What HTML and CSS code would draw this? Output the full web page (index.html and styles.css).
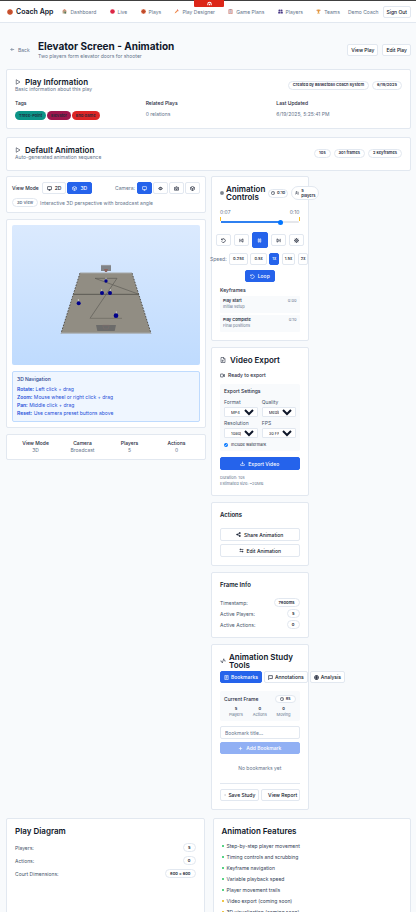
FILE: index.html
```html
<!DOCTYPE html>
<html lang="en">
<head>
<meta charset="utf-8">
<meta name="viewport" content="width=device-width, initial-scale=1">
<title>Coach App</title>
<link rel="stylesheet" href="styles.css">
</head>
<body>
<svg class="sprite" aria-hidden="true">
  <symbol id="play" viewBox="0 0 24 24"><path d="M5 3l15 9-15 9z"/></symbol>
  <symbol id="back" viewBox="0 0 24 24"><path d="M20 12H4M11 5l-7 7 7 7"/></symbol>
  <symbol id="monitor" viewBox="0 0 24 24"><rect x="2" y="3" width="20" height="14" rx="2"/><path d="M8 21h8M12 17v4"/></symbol>
  <symbol id="box" viewBox="0 0 24 24"><path d="M12 2l9 5v10l-9 5-9-5V7zM3 7l9 5 9-5M12 12v10"/></symbol>
  <symbol id="eye" viewBox="0 0 24 24"><path d="M2 12c4-8 16-8 20 0-4 8-16 8-20 0z"/><circle cx="12" cy="12" r="4"/></symbol>
  <symbol id="camera" viewBox="0 0 24 24"><path d="M2 7h5l2-3h6l2 3h5v13H2z"/><circle cx="12" cy="13" r="4"/></symbol>
  <symbol id="clock" viewBox="0 0 24 24"><circle cx="12" cy="12" r="10"/><path d="M12 6v6l4 2"/></symbol>
  <symbol id="users" viewBox="0 0 24 24"><circle cx="9" cy="7" r="4"/><path d="M2 21v-3c0-5 14-5 14 0v3M17 4c4 1 4 6 0 7M22 21v-3c0-2-1-3-3-4"/></symbol>
  <symbol id="reset" viewBox="0 0 24 24"><path d="M3 3v6h6M3 9a9 9 0 1 1 0 7"/></symbol>
  <symbol id="prev" viewBox="0 0 24 24"><path d="M19 4L8 12l11 8zM4 4v16"/></symbol>
  <symbol id="next" viewBox="0 0 24 24"><path d="M5 4l11 8-11 8zM20 4v16"/></symbol>
  <symbol id="pause" viewBox="0 0 24 24"><path d="M6 4h4v16H6zM14 4h4v16h-4z"/></symbol>
  <symbol id="gear" viewBox="0 0 24 24"><circle cx="12" cy="12" r="8"/><circle cx="12" cy="12" r="3"/><path d="M12 1v4M12 19v4M1 12h4M19 12h4M4 4l3 3M17 17l3 3M20 4l-3 3M7 17l-3 3"/></symbol>
  <symbol id="file" viewBox="0 0 24 24"><path d="M4 2h11l5 5v15H4zM14 2v6h6M9 12v6l5-3z"/></symbol>
  <symbol id="video" viewBox="0 0 24 24"><rect x="2" y="5" width="14" height="14" rx="2"/><path d="M16 11l6-4v10l-6-4"/></symbol>
  <symbol id="download" viewBox="0 0 24 24"><path d="M12 3v12M7 10l5 5 5-5M3 15v6h18v-6"/></symbol>
  <symbol id="share" viewBox="0 0 24 24"><g fill="currentColor"><circle cx="18" cy="5" r="3"/><circle cx="6" cy="12" r="3"/><circle cx="18" cy="19" r="3"/></g><path d="M8 11l8-5M8 13l8 5"/></symbol>
  <symbol id="sliders" viewBox="0 0 24 24"><path d="M3 7h18M7 3v8M3 17h18M17 13v8"/></symbol>
  <symbol id="pulse" viewBox="0 0 24 24"><path d="M1 12h5l3 8 6-17 3 9h5"/></symbol>
  <symbol id="bookmark" viewBox="0 0 24 24"><path d="M4 2h16v20H4zM8 7h8M8 12h8M8 17h5"/></symbol>
  <symbol id="message" viewBox="0 0 24 24"><path d="M3 3h18v14H8l-5 5z"/></symbol>
  <symbol id="globe" viewBox="0 0 24 24"><circle cx="12" cy="12" r="10"/><path d="M2 12h20M12 2v20M5 6h14M5 18h14"/></symbol>
  <symbol id="plus" viewBox="0 0 24 24"><path d="M12 4v16M4 12h16"/></symbol>
  <symbol id="dot" viewBox="0 0 24 24"><path d="M10 12h5"/></symbol>
  <symbol id="ball" viewBox="0 0 24 24"><circle cx="12" cy="12" r="11" fill="#dc5b32" stroke="none"/><path d="M12 1v22M1 12h22M5 4c5 5 5 11 0 16M19 4c-5 5-5 11 0 16" stroke="#a8452c" stroke-width="2" fill="none"/></symbol>
</svg>

<div class="shell">
  <header class="topbar">
    <a class="brand" href="#"><svg class="ico l"><use href="#ball"/></svg>Coach App</a>
    <nav class="nav">
      <a href="#"><svg class="ico" viewBox="0 0 24 24"><path d="M3 9l9-7 9 7v13H3z" fill="#b9a184" stroke="none"/><path d="M3 9l9-7 9 7" stroke="#d4543a"/><path d="M12 13h7v9h-7z" fill="#4c7a5a" stroke="none"/></svg>Dashboard</a>
      <a href="#"><svg class="ico" viewBox="0 0 24 24"><circle cx="12" cy="12" r="11" fill="#dc2645" stroke="none"/></svg>Live</a>
      <a href="#"><svg class="ico"><use href="#ball"/></svg>Plays</a>
      <a href="#"><svg class="ico" viewBox="0 0 24 24"><path d="M3 21l3-7L17 3l4 4L10 18z" fill="#ee8a4a" stroke="none"/><path d="M16 3l5 5" stroke="#d53c4c" stroke-width="4"/></svg>Play Designer</a>
      <a href="#"><svg class="ico" viewBox="0 0 24 24"><path d="M4 3h16v20H4z" fill="#f3dfe0" stroke="#c66a5c"/><path d="M9 2h6v4H9z" fill="#7e89a5" stroke="none"/><path d="M8 11h8M8 16h8" stroke="#9aa3bc"/></svg>Game Plans</a>
      <a href="#"><svg class="ico" viewBox="0 0 24 24"><g fill="#4b3a86" stroke="none"><circle cx="7" cy="7" r="5"/><circle cx="17" cy="7" r="5"/><path d="M1 13h10v8H1zM13 13h10v8H13z"/></g></svg>Players</a>
      <a href="#"><svg class="ico" viewBox="0 0 24 24"><path d="M6 2h12v8l-4 4v4h4v4H6v-4h4v-4l-4-4z" fill="#e39a3b" stroke="none"/><path d="M2 4l4 5M22 4l-4 5" stroke="#d0573c"/></svg>Teams</a>
    </nav>
    <span class="user">Demo Coach</span>
    <button class="btn">Sign Out</button>
    <span class="notch"><svg class="ico" viewBox="0 0 24 24"><path d="M4 20v-6a8 8 0 0 1 16 0v6M12 13v7" stroke-width="5"/></svg></span>
  </header>

  <main class="page">
    <div class="page-head">
      <a class="back" href="#"><svg class="ico"><use href="#back"/></svg>Back</a>
      <div class="heading">
        <h1>Elevator Screen - Animation</h1>
        <p>Two players form elevator doors for shooter</p>
      </div>
      <button class="btn">View Play</button>
      <button class="btn">Edit Play</button>
    </div>

    <section class="card info">
      <div class="split">
        <div>
          <h2><svg class="ico l"><use href="#play"/></svg>Play Information</h2>
          <p class="muted">Basic information about this play</p>
        </div>
        <div class="badges"><span class="badge">Created by Basketball Coach System</span><span class="badge">6/19/2025</span></div>
      </div>
      <div class="facts">
        <div><h3>Tags</h3><div class="tags"><span class="tag teal">Three-Point</span><span class="tag plum">Elevator</span><span class="tag red">End Game</span></div></div>
        <div><h3>Related Plays</h3><p class="muted">0 relations</p></div>
        <div><h3>Last Updated</h3><p class="muted">6/19/2025, 5:25:41 PM</p></div>
      </div>
    </section>

    <section class="card intro">
      <div class="split">
        <div>
          <h2><svg class="ico l"><use href="#play"/></svg>Default Animation</h2>
          <p class="muted">Auto-generated animation sequence</p>
        </div>
        <div class="badges"><span class="badge">10s</span><span class="badge">301 frames</span><span class="badge">2 keyframes</span></div>
      </div>
    </section>

    <div class="studio">
      <div class="stack main-col">
        <section class="card tight">
          <div class="toolbar">
            <strong>View Mode</strong>
            <button class="btn mode"><svg class="ico"><use href="#monitor"/></svg>2D</button>
            <button class="btn mode primary"><svg class="ico"><use href="#box"/></svg>3D</button>
            <span class="cam-label">Camera:</span>
            <button class="btn cam primary" aria-label="Broadcast"><svg class="ico"><use href="#monitor"/></svg></button>
            <button class="btn cam" aria-label="Overhead"><svg class="ico"><use href="#eye"/></svg></button>
            <button class="btn cam" aria-label="Sideline"><svg class="ico"><use href="#camera"/></svg></button>
            <button class="btn cam" aria-label="Free"><svg class="ico"><use href="#box"/></svg></button>
          </div>
          <div class="mode-note"><span class="badge">3D View</span><span>Interactive 3D perspective with broadcast angle</span></div>
        </section>

        <section class="card tight">
          <svg class="court" viewBox="36 30 564 420" role="img" aria-label="Court">
            <defs><linearGradient id="sky" x1="0" y1="0" x2="0" y2="1"><stop offset="0" stop-color="#dbeafe"/><stop offset="1" stop-color="#bfdbfe"/></linearGradient></defs>
            <rect x="36" y="30" width="564" height="420" rx="6" fill="url(#sky)"/>
            <path d="M240 174H396L453 355H183z" fill="#918d83"/>
            <path d="M240 174L183 355M396 174l57 181" stroke="#55534e" stroke-width="3" stroke-dasharray="5 4"/>
            <path d="M183 354H453M240 174H396" stroke="#a5a8a8" stroke-width="3"/>
            <path d="M220 238H417" stroke="#5c5a54" stroke-width="3"/>
            <path d="M285 190H351L270 310M285 190L417 238" stroke="#5c5a54" stroke-width="2" fill="none"/>
            <path d="M270 310H366" stroke="#77746c" stroke-width="3"/>
            <path d="M303 150h30v18h-30z" fill="#808488"/><path d="M303 151h30" stroke="#a7abb0" stroke-width="2"/>
            <path d="M312 162h12l-3 9h-6z" fill="#8c6460"/>
            <path d="M288 330h60l-4 18h-52z" fill="#6b6b6a"/><path d="M308 331h20l-4 11h-12z" fill="none" stroke="#7b6d69" stroke-width="2"/>
            <path d="M318 188v8M305 223v8M331 222v8M235 252v8M349 289v8" stroke="#c5c5c0" stroke-width="3"/>
            <g fill="#00008b"><circle cx="318" cy="198" r="5"/><circle cx="306" cy="234" r="6"/><circle cx="330" cy="234" r="6"/><circle cx="236" cy="265" r="6"/><circle cx="348" cy="302" r="7"/></g>
          </svg>
          <div class="help">
            <h3>3D Navigation</h3>
            <p><b>Rotate:</b> Left click + drag</p>
            <p><b>Zoom:</b> Mouse wheel or right click + drag</p>
            <p><b>Pan:</b> Middle click + drag</p>
            <p><b>Reset:</b> Use camera preset buttons above</p>
          </div>
        </section>

        <section class="card tight status">
          <div><b>View Mode</b><span>3D</span></div>
          <div><b>Camera</b><span>Broadcast</span></div>
          <div><b>Players</b><span>5</span></div>
          <div><b>Actions</b><span>0</span></div>
        </section>
      </div>

      <div class="stack">
        <section class="card">
          <div class="control-head">
            <svg class="ico s"><use href="#gear"/></svg>
            <h2>Animation Controls</h2>
            <span class="badge"><svg class="ico s"><use href="#clock"/></svg>0:10</span>
            <span class="badge tall"><svg class="ico s"><use href="#users"/></svg><span>5<br>players</span></span>
          </div>
          <div class="times"><span>0:07</span><span>0:10</span></div>
          <div class="scrub"><input type="range" min="0" max="100" value="78" aria-label="Position"></div>
          <div class="transport">
            <button class="btn" aria-label="Reset"><svg class="ico"><use href="#reset"/></svg></button>
            <button class="btn" aria-label="Previous"><svg class="ico"><use href="#prev"/></svg></button>
            <button class="btn primary big" aria-label="Pause"><svg class="ico"><use href="#pause"/></svg></button>
            <button class="btn" aria-label="Next"><svg class="ico"><use href="#next"/></svg></button>
            <button class="btn" aria-label="Settings"><svg class="ico"><use href="#gear"/></svg></button>
          </div>
          <div class="speeds">
            <span>Speed:</span>
            <button class="btn">0.25x</button><button class="btn">0.5x</button><button class="btn primary">1x</button><button class="btn">1.5x</button><button class="btn">2x</button>
          </div>
          <button class="btn primary loop"><svg class="ico"><use href="#reset"/></svg>Loop</button>
          <h3 class="key-title">Keyframes</h3>
          <div class="keyframe"><b>Play Start</b><span>0:00</span><p>Initial setup</p></div>
          <div class="keyframe"><b>Play Complete</b><span>0:10</span><p>Final positions</p></div>
        </section>

        <section class="card">
          <h2><svg class="ico l"><use href="#file"/></svg>Video Export</h2>
          <p class="ready"><svg class="ico"><use href="#video"/></svg>Ready to export</p>
          <div class="panel settings">
            <h3>Export Settings</h3>
            <div class="fields">
              <label>Format<select><option>MP4</option></select></label>
              <label>Quality<select><option>Medium</option></select></label>
              <label>Resolution<select><option>1080p</option></select></label>
              <label>FPS<select><option>30 FPS</option></select></label>
            </div>
            <label class="check"><input type="checkbox" checked>Include watermark</label>
          </div>
          <button class="btn primary wide"><svg class="ico"><use href="#download"/></svg>Export Video</button>
          <p class="fine">Duration: 10s</p>
          <p class="fine">Estimated size: ~20MB</p>
        </section>

        <section class="card">
          <h3 class="card-title">Actions</h3>
          <div class="actions">
            <button class="btn wide"><svg class="ico"><use href="#share"/></svg>Share Animation</button>
            <button class="btn wide"><svg class="ico"><use href="#sliders"/></svg>Edit Animation</button>
          </div>
        </section>

        <section class="card">
          <h3 class="card-title">Frame Info</h3>
          <dl class="rows">
            <div><dt>Timestamp:</dt><dd class="badge">7800ms</dd></div>
            <div><dt>Active Players:</dt><dd class="badge">5</dd></div>
            <div><dt>Active Actions:</dt><dd class="badge">0</dd></div>
          </dl>
        </section>

        <section class="card">
          <h2 class="study-title"><svg class="ico l"><use href="#pulse"/></svg><span>Animation Study Tools</span></h2>
          <div class="tabs">
            <button class="btn primary"><svg class="ico"><use href="#bookmark"/></svg>Bookmarks</button>
            <button class="btn"><svg class="ico"><use href="#message"/></svg>Annotations</button>
            <button class="btn"><svg class="ico"><use href="#globe"/></svg>Analysis</button>
          </div>
          <div class="panel frame">
            <div class="split"><h3>Current Frame</h3><span class="badge"><svg class="ico s"><use href="#clock"/></svg>8s</span></div>
            <div class="counts"><div><b>5</b><span>Players</span></div><div><b>0</b><span>Actions</span></div><div><b>0</b><span>Moving</span></div></div>
          </div>
          <input class="field" type="text" placeholder="Bookmark title..." aria-label="Bookmark title">
          <button class="btn primary wide" disabled><svg class="ico"><use href="#plus"/></svg>Add Bookmark</button>
          <p class="empty">No bookmarks yet</p>
          <div class="footer-actions"><button class="btn"><svg class="ico s"><use href="#dot"/></svg>Save Study</button><button class="btn"><svg class="ico s"></svg>View Report</button></div>
        </section>
      </div>
    </div>

    <div class="summary">
      <section class="card">
        <h2>Play Diagram</h2>
        <dl class="rows loose">
          <div><dt>Players:</dt><dd class="badge">5</dd></div>
          <div><dt>Actions:</dt><dd class="badge">0</dd></div>
          <div><dt>Court Dimensions:</dt><dd class="badge">800 x 600</dd></div>
        </dl>
      </section>
      <section class="card">
        <h2>Animation Features</h2>
        <ul class="features">
          <li>Step-by-step player movement</li>
          <li>Timing controls and scrubbing</li>
          <li>Keyframe navigation</li>
          <li>Variable playback speed</li>
          <li>Player movement trails</li>
          <li class="soon">Video export (coming soon)</li>
          <li class="soon">3D visualization (coming soon)</li>
        </ul>
      </section>
    </div>
  </main>
</div>
</body>
</html>
```
FILE: styles.css
```css
* { box-sizing: border-box; margin: 0; padding: 0; }
body { font: 5px/6px Inter, "Liberation Sans", sans-serif; color: #1e293b; background: #f8fafc; }
a { color: inherit; text-decoration: none; }
button, input, select { font: inherit; color: inherit; }
.sprite { position: absolute; width: 0; height: 0; }
.shell { height: 100vh; overflow-y: auto; scrollbar-width: none; }

.ico { width: 5px; height: 5px; flex: none; fill: none; stroke: currentColor; stroke-width: 3; }
.ico.s { width: 4px; height: 4px; }
.ico.l { width: 6px; height: 6px; }

.topbar { position: relative; display: flex; align-items: center; height: 23px; padding: 0 5px 0 7px; background: #fff; border-top: 1px solid #404040; border-bottom: 1px solid #e2e8f0; }
.brand { display: flex; align-items: center; gap: 3px; font-size: 7px; font-weight: 600; color: #0f172a; }
.nav { flex: 1; display: flex; justify-content: space-between; margin: 0 8px 0 9px; color: #64748b; }
.nav a { display: flex; align-items: center; gap: 3px; white-space: nowrap; }
.user { margin-right: 4px; color: #64748b; white-space: nowrap; }
.notch { position: absolute; top: -1px; left: 194px; width: 30px; height: 7px; display: flex; justify-content: center; align-items: center; background: #dc2618; color: #fff; border-radius: 0 0 1px 1px; }

.btn { display: flex; align-items: center; justify-content: center; gap: 3px; height: 12px; padding: 0 4px; background: #fff; border: 1px solid #e2e8f0; border-radius: 2px; font-weight: 500; color: #0f172a; white-space: nowrap; }
.btn.primary { background: #2563eb; border-color: #2563eb; color: #fff; }
.btn.wide { width: 100%; height: 13px; }
.btn.wide:disabled { height: 12px; opacity: .5; }

.badge { display: flex; align-items: center; justify-content: center; gap: 2px; height: 9px; padding: 0 4px; background: #fff; border: 1px solid #e2e8f0; border-radius: 8px; font-size: 4px; font-weight: 600; white-space: nowrap; }
.badges { display: flex; gap: 3px; }
.split { display: flex; align-items: center; justify-content: space-between; }
.muted { color: #64748b; }

.page { padding: 17px 5px 8px 6px; }
.page-head { display: flex; align-items: center; gap: 4px; margin-bottom: 9px; }
.page-head .btn, .topbar .btn { padding: 0 3px; }
.back { display: flex; gap: 3px; width: 28px; padding-left: 4px; color: #64748b; }
.heading { flex: 1; }
h1 { font-size: 10px; line-height: 12px; font-weight: 700; color: #0f172a; }
.heading p { line-height: 8px; color: #64748b; }
h2 { display: flex; align-items: center; gap: 4px; font-size: 8px; line-height: 8px; font-weight: 600; color: #0f172a; }
h2 .ico { stroke-width: 2; }
h3 { font-size: 5px; line-height: 6px; font-weight: 500; }

.card { padding: 8px; background: #fff; border: 1px solid #e2e8f0; border-radius: 2px; }
.card.tight { padding: 5px; }
.info { margin-bottom: 8px; }
.facts { display: grid; grid-template-columns: repeat(3, 1fr); gap: 5px; margin-top: 8px; }
.facts h3 { margin-bottom: 5px; }
.tags { display: flex; gap: 1px; }
.tag { height: 9px; padding: 0 4px; border-radius: 5px; font-size: 4px; line-height: 9px; font-weight: 600; white-space: nowrap; }
.teal { background: #0d9488; }
.plum { background: #9d174d; }
.red { background: #dc2626; }
.intro { padding: 8px 8px 10px; margin-bottom: 5px; }

.studio { display: grid; grid-template-columns: repeat(4, minmax(0, 1fr)); gap: 5px; align-items: start; }
.main-col { grid-column: span 2; }
.stack { display: grid; grid-template-columns: minmax(0, 1fr); gap: 6px; }

.toolbar { display: flex; align-items: center; gap: 1px; }
.toolbar strong { margin-right: 2px; font-weight: 500; }
.mode { padding: 0 4px; }
.cam-label { margin-left: auto; margin-right: 1px; color: #64748b; }
.cam { width: 15px; padding: 0; }
.mode-note { display: flex; align-items: center; gap: 2px; margin-top: 4px; color: #64748b; }
.court { display: block; width: 100%; }
.help { margin-top: 6px; padding: 4px; background: #eff6ff; border: 1px solid #bfdbfe; border-radius: 2px; color: #1d4ed8; }
.help h3 { line-height: 7px; margin-bottom: 2px; color: #1e3a8a; }
.help p { line-height: 8px; }
.help b { font-weight: 600; }
.status { display: grid; grid-template-columns: repeat(4, 1fr); text-align: center; line-height: 7px; }
.status b { display: block; font-weight: 500; }
.status span { color: #64748b; }

.control-head { display: flex; align-items: center; gap: 2px; height: 16px; }
.control-head h2 { flex: none; width: 40px; }
.control-head .badge { flex: none; padding: 0 2px; }
.control-head .tall { height: 14px; margin-left: 1px; padding: 0 3px; line-height: 5px; }
.times { display: flex; justify-content: space-between; margin-top: 8px; color: #64748b; }
.scrub { height: 10px; margin: 2px 0 5px; border: solid #fbbf24; border-width: 0 1px; border-image: linear-gradient(#fbbf24 40%, transparent 40%) 1; }
input[type=range] { display: block; width: 100%; height: 10px; appearance: none; background: linear-gradient(90deg, #2f80f0 78%, #e5e7eb 78%) center / 100% 2px no-repeat; }
input[type=range]::-webkit-slider-thumb { appearance: none; width: 5px; height: 5px; border-radius: 50%; background: #0075ff; }
.transport { display: flex; align-items: center; justify-content: space-between; margin: 0 -4px; }
.transport .btn { width: 15px; padding: 0; }
.transport .big { width: 16px; height: 16px; }
.speeds { display: flex; align-items: center; justify-content: space-between; margin: 5px -9px 5px -10px; color: #64748b; }
.speeds .btn { padding: 0 2px; font-size: 4px; }
.speeds .btn:nth-of-type(-n+2) { padding: 0 3px; }
.loop { margin: 0 auto; }
.key-title { margin: 5px 0 3px; }
.keyframe { display: grid; grid-template-columns: 1fr auto; padding: 2px 3px 3px; background: #f8fafc; border-radius: 1px; font-size: 4px; color: #64748b; }
.keyframe b { font-weight: 600; color: #1e293b; }
.keyframe + .keyframe { margin-top: 2px; }

.ready { display: flex; align-items: center; gap: 3px; margin: 8px 0 6px; font-weight: 500; }
.panel { padding: 4px; background: #f8fafc; border-radius: 2px; }
.settings { padding-bottom: 3px; margin-bottom: 6px; }
.fields { display: grid; grid-template-columns: repeat(2, minmax(0, 1fr)); gap: 3px 4px; margin: 5px 0 4px; color: #475569; }
.fields select { display: block; width: 100%; height: 10px; margin-top: 2px; padding-left: 2px; background: #fff; border: 1px solid #e2e8f0; border-radius: 1px; font-size: 4px; color: #0f172a; }
.check { display: flex; align-items: center; gap: 3px; font-size: 4px; }
.check input { width: 4px; height: 4px; }
.fine { font-size: 4px; color: #64748b; }
.wide + .fine { margin-top: 5px; }

.card-title { font-size: 6px; line-height: 8px; font-weight: 600; margin-bottom: 9px; color: #0f172a; }
.actions { display: grid; gap: 3px; }
.rows { display: grid; gap: 2px; }
.rows div { display: flex; align-items: center; justify-content: space-between; color: #475569; }
.rows dd { color: #0f172a; }
.rows.loose { gap: 4px; margin-top: 8px; }

.study-title { gap: 3px; }
.tabs { display: flex; gap: 2px; margin: 2px 0 8px; }
.tabs .btn { flex: none; gap: 2px; padding: 0 3px; }
.frame .badge { height: 8px; }
.frame { margin-bottom: 5px; }
.counts { display: grid; grid-template-columns: repeat(3, 1fr); margin-top: 3px; text-align: center; font-size: 4px; line-height: 5px; color: #64748b; }
.counts b { display: block; line-height: 6px; font-weight: 600; color: #1e293b; }
.field { display: block; width: 100%; height: 13px; margin-bottom: 3px; padding: 0 4px; background: #fff; border: 1px solid #e2e8f0; border-radius: 2px; }
.field::placeholder { color: #64748b; }
.empty { padding: 11px 0 12px; text-align: center; color: #64748b; }
.footer-actions { display: grid; grid-template-columns: repeat(2, minmax(0, 1fr)); gap: 2px; padding-top: 5px; border-top: 1px solid #e2e8f0; }
.footer-actions .btn { gap: 1px; padding: 0 2px; }

.summary { display: grid; grid-template-columns: repeat(2, minmax(0, 1fr)); gap: 8px; margin-top: 8px; }
.features { display: grid; gap: 5px; margin-top: 8px; list-style: none; color: #334155; }
.features li { display: flex; align-items: center; gap: 3px; }
.features li::before { content: ""; width: 2px; height: 2px; border-radius: 1px; background: #22c55e; }
.features .soon::before { background: #eab308; }
```
